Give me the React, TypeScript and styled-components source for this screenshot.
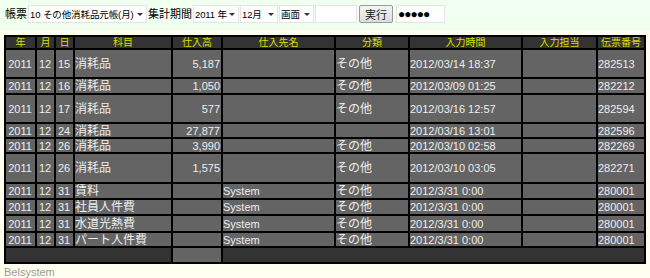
import React from "react";
import styled, {createGlobalStyle} from "styled-components";

const GlobalStyle = createGlobalStyle`
    html, body {
        margin: 0;
        padding: 0;
        background-color: #fffff0;
        font-family: "Liberation Sans", "Noto Sans CJK JP", sans-serif;
    }
`;

const Page = styled.div`
    width: 650px;
    height: 278px;
    overflow: hidden;
`;

const Toolbar = styled.form`
    height: 30px;
    box-sizing: border-box;
    padding: 5px 0 0 5px;
    background-color: #f0fff0;
    display: flex;
    align-items: flex-start;
    gap: 1px;
    font-size: 11px;
    color: #000;
`;

const Label = styled.span`
    height: 18px;
    line-height: 18px;
    font-size: 11px;
`;

const SelectWrap = styled.span<{ $w: number }>`
    position: relative;
    display: inline-block;
    width: ${p => p.$w}px;
    height: 18px;

    &::after {
        content: "";
        position: absolute;
        right: 4px;
        top: 8px;
        border-left: 3px solid transparent;
        border-right: 3px solid transparent;
        border-top: 3px solid #333;
        pointer-events: none;
    }
`;

const Select = styled.select`
    appearance: none;
    -webkit-appearance: none;
    width: 100%;
    height: 18px;
    box-sizing: border-box;
    margin: 0;
    padding: 0 9px 0 1px;
    border: 1px solid #e4e4e4;
    border-radius: 0;
    background-color: #fff;
    font-family: "Liberation Sans", "Noto Sans CJK JP", sans-serif;
    font-size: 9.5px;
    letter-spacing: -0.1px;
    color: #000;
`;

const TextBox = styled.input<{ $w: number; $dots?: boolean }>`
    width: ${p => p.$w}px;
    height: 18px;
    box-sizing: border-box;
    margin: 0 0 0 ${p => p.$dots ? 2 : 0}px;
    padding: 0 1px;
    border: 1px solid #e4e4e4;
    background-color: #fff;
    font-family: "Liberation Sans", "Noto Sans CJK JP", sans-serif;
    font-size: ${p => p.$dots ? 12 : 11}px;
    letter-spacing: ${p => p.$dots ? -1 : 0}px;
    color: #000;
    outline: none;
`;

const RunButton = styled.button`
    width: 34px;
    height: 18px;
    box-sizing: border-box;
    margin: 0 0 0 1px;
    padding: 0;
    border: 1px solid #9a9a9a;
    border-radius: 2px;
    background: linear-gradient(#f4f4f4, #dcdcdc);
    font-family: "Liberation Sans", "Noto Sans CJK JP", sans-serif;
    font-size: 11px;
    color: #222;
`;

const Grid = styled.table`
    margin: 5px 0 0 4px;
    width: 642px;
    table-layout: fixed;
    border-spacing: 2px;
    background-color: #000;
    font-size: 11px;
    color: #eeeeee;
`;

const HeadCell = styled.th`
    height: 11px;
    padding: 0;
    line-height: 11px;
    background-color: #333;
    color: #dede00;
    font-size: 10px;
    font-weight: normal;
    text-align: center;
    white-space: nowrap;
    overflow: hidden;
`;

const Cell = styled.td<{ $align?: "left" | "center" | "right"; $h: number; $big?: boolean }>`
    height: ${p => p.$h}px;
    padding: 0 1px 0 0;
    line-height: 12px;
    background-color: #646464;
    text-align: ${p => p.$align || "left"};
    vertical-align: middle;
    font-size: ${p => p.$big ? 12 : 11}px;
    white-space: nowrap;
    overflow: hidden;
`;

const FootCell = styled.td<{ $light?: boolean }>`
    height: 14px;
    padding: 0;
    background-color: ${p => p.$light ? "#646464" : "#333"};
`;

const Credit = styled.div`
    margin: 2px 0 0 4px;
    font-size: 11px;
    color: #9a9a9a;
`;

const cols = [29, 17, 17, 96, 48, 111, 72, 111, 73, 46];
const heads = ["年", "月", "日", "科目", "仕入高", "仕入先名", "分類", "入力時間", "入力担当", "伝票番号"];

type Row = { d: string; item: string; amount: string; vendor: string; kind: string; time: string; no: string; h: number };

const rows: Row[] = [
  {d: "15", item: "消耗品", amount: "5,187", vendor: "", kind: "その他", time: "2012/03/14 18:37", no: "282513", h: 27},
  {d: "16", item: "消耗品", amount: "1,050", vendor: "", kind: "その他", time: "2012/03/09 01:25", no: "282212", h: 14},
  {d: "17", item: "消耗品", amount: "577", vendor: "", kind: "その他", time: "2012/03/16 12:57", no: "282594", h: 27},
  {d: "24", item: "消耗品", amount: "27,877", vendor: "", kind: "", time: "2012/03/16 13:01", no: "282596", h: 13},
  {d: "26", item: "消耗品", amount: "3,990", vendor: "", kind: "その他", time: "2012/03/10 02:58", no: "282269", h: 13},
  {d: "26", item: "消耗品", amount: "1,575", vendor: "", kind: "その他", time: "2012/03/10 03:05", no: "282271", h: 28},
  {d: "31", item: "賃料", amount: "", vendor: "System", kind: "その他", time: "2012/3/31 0:00", no: "280001", h: 14},
  {d: "31", item: "社員人件費", amount: "", vendor: "System", kind: "その他", time: "2012/3/31 0:00", no: "280001", h: 14},
  {d: "31", item: "水道光熱費", amount: "", vendor: "System", kind: "その他", time: "2012/3/31 0:00", no: "280001", h: 15},
  {d: "31", item: "パート人件費", amount: "", vendor: "System", kind: "その他", time: "2012/3/31 0:00", no: "280001", h: 13},
];

const App = () => {
  return (
    <Page>
      <GlobalStyle/>
      <Toolbar onSubmit={e => e.preventDefault()}>
        <Label>帳票</Label>
        <SelectWrap $w={119}>
          <Select defaultValue="10">
            <option value="10">10 その他消耗品元帳(月)</option>
          </Select>
        </SelectWrap>
        <Label>集計期間</Label>
        <SelectWrap $w={46}>
          <Select defaultValue="2011">
            <option value="2011">2011 年</option>
          </Select>
        </SelectWrap>
        <SelectWrap $w={38}>
          <Select defaultValue="12">
            <option value="12">12月</option>
          </Select>
        </SelectWrap>
        <SelectWrap $w={35}>
          <Select defaultValue="screen">
            <option value="screen">画面</option>
          </Select>
        </SelectWrap>
        <TextBox $w={42} type="text" defaultValue=""/>
        <RunButton type="submit">実行</RunButton>
        <TextBox $w={49} $dots type="text" defaultValue="●●●●●" readOnly/>
      </Toolbar>

      <Grid>
        <colgroup>
          {cols.map((w, i) => <col key={i} style={{width: w}}/>)}
        </colgroup>
        <thead>
          <tr>
            {heads.map(h => <HeadCell key={h}>{h}</HeadCell>)}
          </tr>
        </thead>
        <tbody>
          {
            rows.map((r, i) => (
              <tr key={i}>
                <Cell $h={r.h} $align="center">2011</Cell>
                <Cell $h={r.h} $align="center">12</Cell>
                <Cell $h={r.h} $align="center">{r.d}</Cell>
                <Cell $h={r.h} $big>{r.item}</Cell>
                <Cell $h={r.h} $align="right">{r.amount}</Cell>
                <Cell $h={r.h}>{r.vendor}</Cell>
                <Cell $h={r.h} $big>{r.kind}</Cell>
                <Cell $h={r.h}>{r.time}</Cell>
                <Cell $h={r.h}/>
                <Cell $h={r.h}>{r.no}</Cell>
              </tr>
            ))
          }
          <tr>
            <FootCell colSpan={4}/>
            <FootCell $light/>
            <FootCell colSpan={5}/>
          </tr>
        </tbody>
      </Grid>
      <Credit>Belsystem</Credit>
    </Page>
  );
};

export default App;
